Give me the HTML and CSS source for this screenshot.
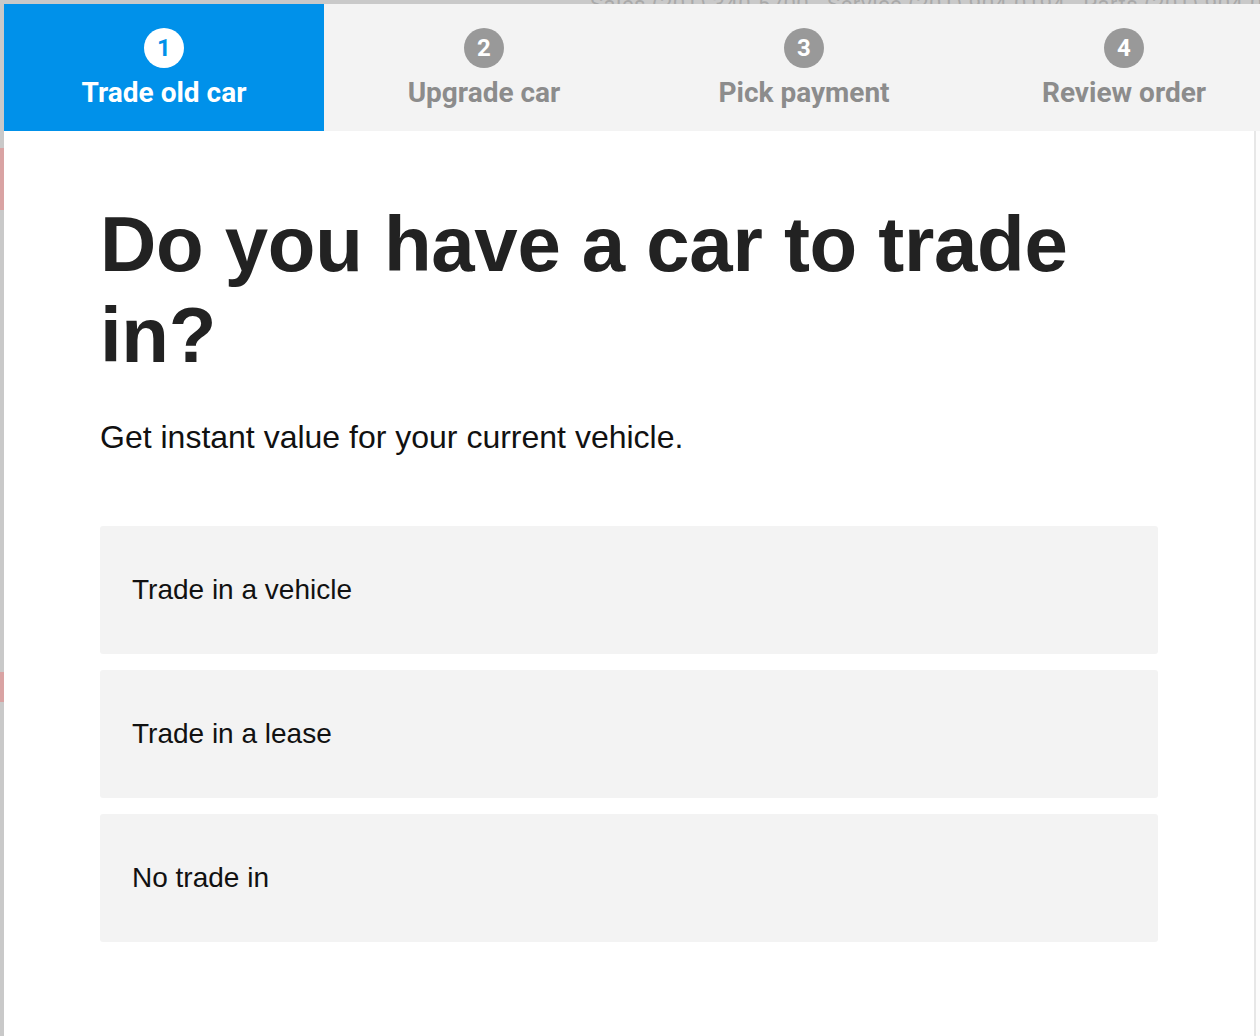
FILE: index.html
```html
<!DOCTYPE html>
<html lang="en">
<head>
<meta charset="utf-8">
<title>Trade in</title>
<link rel="stylesheet" href="styles.css">
</head>
<body>
<div class="page" aria-hidden="true">
  <div class="page-top"><span class="page-top-text">Sales (201) 340-5700 &nbsp; Service (201) 904-0194 &nbsp; Parts (201) 904-0195</span></div>
  <div class="page-side">
    <div class="side-mark mark-a"></div>
    <div class="side-mark mark-b"></div>
  </div>
</div>

<div class="modal">
  <nav class="steps">
    <div class="step step-active">
      <span class="step-num">1</span>
      <span class="step-label">Trade old car</span>
    </div>
    <div class="step">
      <span class="step-num">2</span>
      <span class="step-label">Upgrade car</span>
    </div>
    <div class="step">
      <span class="step-num">3</span>
      <span class="step-label">Pick payment</span>
    </div>
    <div class="step">
      <span class="step-num">4</span>
      <span class="step-label">Review order</span>
    </div>
  </nav>
  <div class="modal-body">
    <main class="content">
      <h1 class="title">Do you have a car to trade in?</h1>
      <p class="lead">Get instant value for your current vehicle.</p>
      <div class="options">
        <button class="option">Trade in a vehicle</button>
        <button class="option">Trade in a lease</button>
        <button class="option">No trade in</button>
      </div>
    </main>
    <div class="scroll-track"></div>
  </div>
</div>
</body>
</html>
```
FILE: styles.css
```css
html, body {
  margin: 0;
  padding: 0;
  height: 100%;
  overflow: hidden;
}
body {
  background: #c9c9c9;
  font-family: "Liberation Sans", Arial, sans-serif;
}
.page {
  height: 100%;
  display: flex;
  flex-direction: column;
}
.page-top {
  height: 4px;
  overflow: hidden;
  display: flex;
  align-items: flex-end;
  padding-left: 590px;
}
.page-top-text {
  font-family: "Roboto", sans-serif;
  font-size: 22px;
  line-height: 22px;
  color: #a9a9a9;
  white-space: nowrap;
  margin-bottom: -12px;
  letter-spacing: 0.5px;
}
.page-side {
  flex: 1;
  width: 4px;
  display: flex;
  flex-direction: column;
}
.side-mark {
  width: 4px;
  background: #d9a3a3;
}
.mark-a {
  margin-top: 144px;
  height: 62px;
}
.mark-b {
  margin-top: 462px;
  height: 30px;
}

.modal {
  position: fixed;
  top: 4px;
  left: 4px;
  width: 1280px;
  bottom: 0;
  background: #ffffff;
  display: flex;
  flex-direction: column;
}
.steps {
  display: grid;
  grid-template-columns: repeat(4, 320px);
  height: 127px;
  background: #f3f3f3;
}
.step {
  display: flex;
  flex-direction: column;
  align-items: center;
  padding-top: 24px;
  box-sizing: border-box;
  color: #8c8c8c;
  font-family: "Roboto", "Liberation Sans", sans-serif;
  font-weight: 700;
}
.step-num {
  width: 40px;
  height: 40px;
  border-radius: 50%;
  background: #999999;
  color: #ffffff;
  display: flex;
  align-items: center;
  justify-content: center;
  font-size: 24px;
  line-height: 1;
}
.step-label {
  margin-top: 9px;
  font-size: 28px;
  line-height: 32px;
}
.step-active {
  background: #0091ea;
  color: #ffffff;
}
.step-active .step-num {
  background: #ffffff;
  color: #0091ea;
}

.modal-body {
  flex: 1;
  display: flex;
  min-height: 0;
}
.content {
  width: 1250px;
  box-sizing: border-box;
  padding: 68px 96px 0 96px;
}
.scroll-track {
  width: 28px;
  border-left: 2px solid #e7e7e7;
  background: #fcfcfc;
}
.title {
  margin: 0;
  font-size: 78px;
  line-height: 91px;
  font-weight: 700;
  color: #222222;
  letter-spacing: -0.3px;
}
.lead {
  margin: 32px 0 0 0;
  font-size: 32px;
  line-height: 48px;
  color: #111111;
}
.options {
  margin-top: 65px;
  display: flex;
  flex-direction: column;
  gap: 16px;
}
.option {
  height: 128px;
  display: flex;
  align-items: center;
  padding: 0 32px;
  border: none;
  border-radius: 3px;
  background: #f3f3f3;
  font-family: "Liberation Sans", Arial, sans-serif;
  font-size: 28px;
  color: #111111;
  text-align: left;
  cursor: pointer;
}
```
